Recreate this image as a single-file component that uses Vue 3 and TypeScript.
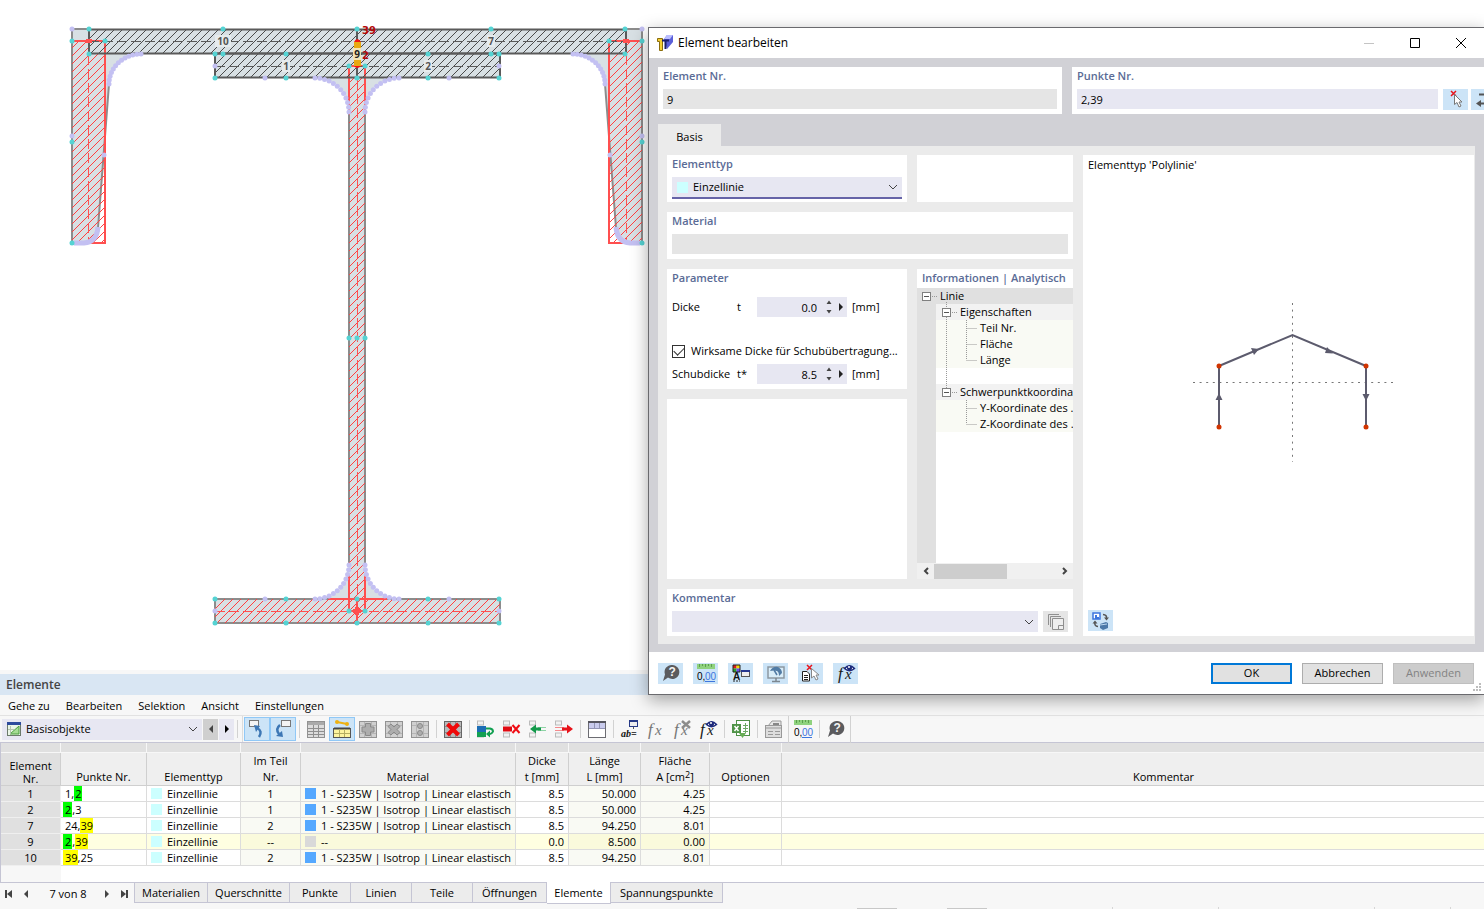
<script setup lang="ts">
import { ref } from 'vue'

interface Pt { x: number; y: number }

/* ---------- section drawing ---------- */
const axis = 357

const mirror = (pts: Pt[]): Pt[] => [...pts, ...pts.map(p => ({ x: 2 * axis - p.x, y: p.y }))]

function quarter(cx: number, cy: number, rx: number, ry: number, from: number, to: number, steps: number): Pt[] {
  return Array.from({ length: steps + 1 }, (_, i) => {
    const a = ((from + ((to - from) * i) / steps) * Math.PI) / 180
    return { x: cx + rx * Math.cos(a), y: cy + ry * Math.sin(a) }
  })
}

const softNodes: Pt[] = mirror([
  { x: 72, y: 29 }, { x: 72, y: 136 }, { x: 104, y: 155 },
  { x: 215, y: 66 }, { x: 265, y: 78 }, { x: 265, y: 599 }, { x: 215, y: 611 },
  ...quarter(141, 84, 32, 30, 180, 270, 12),
  ...quarter(315, 112, 34, 34, 0, -90, 11),
  ...quarter(315, 565, 34, 34, 0, 90, 11),
])

const hardNodes: Pt[] = [
  ...mirror([
    { x: 72, y: 41 }, { x: 105, y: 41 }, { x: 72, y: 142 }, { x: 72, y: 243 },
    { x: 89, y: 29 }, { x: 223, y: 29 }, { x: 89, y: 54 }, { x: 223, y: 54 },
    { x: 215, y: 54 }, { x: 286, y: 54 }, { x: 286, y: 78 }, { x: 215, y: 78 },
    { x: 349, y: 66 }, { x: 349, y: 338 }, { x: 349, y: 611 },
    { x: 215, y: 599 }, { x: 286, y: 599 }, { x: 215, y: 623 }, { x: 286, y: 623 },
  ]),
  { x: 357, y: 29 }, { x: 357, y: 78 }, { x: 357, y: 338 }, { x: 357, y: 599 }, { x: 357, y: 623 },
]

const elementLabels = [
  { x: 223, y: 41, t: '10' }, { x: 491, y: 41, t: '7' },
  { x: 286, y: 66, t: '1' }, { x: 428, y: 66, t: '2' },
]

/* ---------- icons ---------- */
const fxText = (c: string) =>
  `<text x="1" y="15" font-family="Liberation Serif, serif" font-style="italic" font-size="17" fill="${c}">f</text><text x="8" y="15" font-family="Liberation Serif, serif" font-style="italic" font-size="15" fill="${c}">x</text>`

const eye =
  '<path d="M7.500 4.500Q12.500-1 17.500 4.500Q12.500 9 7.500 4.500Z" fill="#fff" stroke="#1d2a7c" stroke-width="1.500"/><circle cx="12.500" cy="4" r="2.500" fill="#1d2a7c"/><circle cx="12" cy="3" r="1" fill="#fff"/>'

const cells =
  '<rect x="0.500" y="1" width="6" height="4" fill="#f2f2f2" stroke="#bbb"/><rect x="0.500" y="13" width="6" height="4" fill="#f2f2f2" stroke="#bbb"/>'

const greyTile = '<rect x="0.500" y="1.500" width="17" height="16" fill="#d0d0d0" stroke="#929292"/><path d="M1 5.500H17M1 13.500H17M5.500 2V17M12.500 2V17" stroke="#b5b5b5"/>'

const icons: Record<string, string> = {
  jumpUp: '<rect x="1.500" y="0.500" width="9" height="6" fill="#f4f4f4" stroke="#777"/><path d="M11 17Q15 11 9 8" fill="none" stroke="#3d77b5" stroke-width="2.500"/><path d="M6 5L12 6L8 12Z" fill="#3d77b5"/>',
  jumpDown: '<rect x="7.500" y="0.500" width="9" height="6" fill="#f4f4f4" stroke="#777"/><path d="M6 5Q1 9 5 14" fill="none" stroke="#3d77b5" stroke-width="2.500"/><path d="M9 17L2 16L8 11Z" fill="#3d77b5"/>',
  grid: '<rect x="0.500" y="1.500" width="17" height="16" fill="#dcdcdc" stroke="#929292"/><path d="M1 2H17V5H1Z" fill="#aaa"/><path d="M1 8.500H17M1 11.500H17M1 14.500H17M6.500 5V17M11.500 5V17" stroke="#8f8f8f"/>',
  gridPick: '<path d="M4 2L14 4" stroke="#eeb111" stroke-width="2"/><circle cx="4" cy="2" r="2" fill="#eeb111"/><circle cx="14" cy="4" r="2" fill="#eeb111"/><rect x="0.500" y="8.500" width="17" height="9" fill="#fdf4a0" stroke="#555"/><path d="M1 8.500H17" stroke="#444" stroke-width="2"/><path d="M1 13.500H17M6.500 9V17M11.500 9V17" stroke="#b5ae62"/>',
  plus: greyTile + '<path d="M6.500 3.500H11.500V7H15V12H11.500V15.500H6.500V12H3V7H6.500Z" fill="#adadad" stroke="#8a8a8a"/>',
  cross: greyTile + '<path d="M6 4L9 7L12 4L15 6.500L12 9.500L15 12.500L12 15L9 12L6 15L3 12.500L6 9.500L3 6.500Z" fill="#adadad" stroke="#8a8a8a"/>',
  dots: greyTile + '<circle cx="9" cy="6" r="2.500" fill="#adadad" stroke="#8a8a8a"/><circle cx="9" cy="13" r="2.500" fill="#adadad" stroke="#8a8a8a"/>',
  deleteAll: '<rect x="0.500" y="1.500" width="17" height="16" fill="#b9b9b9" stroke="#666"/><path d="M1 6.500H17M1 12.500H17M6.500 2V17M11.500 2V17" stroke="#8b8b8b"/><path d="M3.500 4L14.500 15M14.500 4L3.500 15" stroke="#f00808" stroke-width="4"/>',
  rowInsert: cells + '<path d="M0 6H9V12H0Z" fill="#1c6db5"/><path d="M0 12H9V17H0Z" fill="#12a052"/><path d="M9 8.500H13Q16 9 16 11.500Q15 14 12 14" fill="none" stroke="#12a052" stroke-width="2"/><path d="M13 10.500V17.500L9 14Z" fill="#12a052"/>',
  rowDelete: cells + '<path d="M0 6.500H9V11.500H0Z" fill="#e00a12"/><path d="M9.500 5L16.500 13M16.500 5L9.500 13" stroke="#f00c14" stroke-width="2"/>',
  rowLeft: cells + '<path d="M9 7.500H17M9 10.500H17" stroke="#8ed3a5"/><path d="M6 9H12" stroke="#12994a" stroke-width="3"/><path d="M1 9L7 4.500V13.500Z" fill="#12994a"/>',
  rowRight: cells + '<path d="M0 7.500H9M0 10.500H9" stroke="#f5898c"/><path d="M7 9H13" stroke="#e7131a" stroke-width="3"/><path d="M18 9L12 4.500V13.500Z" fill="#e7131a"/>',
  layout: '<rect x="0.500" y="1.500" width="17" height="16" fill="#fff" stroke="#6c6c72"/><path d="M1 3H17V9H1Z" fill="#c9cbed"/><path d="M1 8.500H17M6.500 3V8M11.500 3V8" stroke="#9295b5"/><path d="M0 2H18" stroke="#55555e" stroke-width="2"/>',
  rename: '<rect x="8.500" y="0.500" width="8" height="6" fill="#eee" stroke="#273a87"/><path d="M8 1H17" stroke="#273a87" stroke-width="2"/><path d="M12.500 7V9" stroke="#555"/><text x="0" y="17" font-family="Liberation Serif, serif" font-style="italic" font-weight="700" font-size="10" fill="#111">ab=</text>',
  fx: fxText('#767676'),
  fxDelete: fxText('#767676') + '<path d="M9 1L17 8M17 1L9 8" stroke="#8c8c8c" stroke-width="2.500"/>',
  fxView: fxText('#1a1a1a') + eye,
  excel: '<rect x="4.500" y="0.500" width="13" height="15" fill="#fff" stroke="#4f8f48"/><path d="M11 5.500H16M11 8.500H16M11 11.500H16M13.500 3V13" stroke="#6da965"/><path d="M0 4H9V13H0Z" fill="#4f9347"/><path d="M2.500 6L6.500 11M6.500 6L2.500 11" stroke="#fff" stroke-width="1.500"/><path d="M7 13H14L10.500 18Z" fill="#67ad55"/>',
  printer: '<path d="M3 6L7 1H16V7" fill="#e8e8e8" stroke="#999"/><rect x="0.500" y="5.500" width="16" height="12" fill="#ddd" stroke="#999"/><path d="M1 8H16M3 11.500H8M10 11.500H15M3 14.500H8M10 14.500H15" stroke="#999"/><path d="M8 4H14" stroke="#888" stroke-width="2"/>',
  units: '<rect x="0" y="0" width="18" height="5" fill="#8fd27e"/><path d="M2.500 0V3M5.500 0V2M8.500 0V3M11.500 0V2M14.500 0V3" stroke="#5d9f4e"/><text x="0" y="16" font-family="Liberation Sans, sans-serif" font-size="10" fill="#000">0,</text><text x="8" y="16" font-family="Liberation Sans, sans-serif" font-size="10" fill="#3d76de">00</text><path d="M8 17.500H18" stroke="#3d76de"/>',
  help: '<path d="M10 1A7 7 0 1 1 6 13.500L1 17L3 10.500A7 7 0 0 1 10 1Z" fill="#5b5b5e"/><text x="6.500" y="12" font-family="Liberation Sans, sans-serif" font-weight="700" font-size="12" fill="#f4f4f4">?</text>',
  pick: '<path d="M4 0L9 5M9 0L4 5" stroke="#e8141c" stroke-width="1.500"/><path d="M7.500 3.500V13.500L10 11.500L12 16L14 15L12 11H15Z" fill="#fff" stroke="#777"/>',
  swap: '<path d="M4 3.500H16" stroke="#555" stroke-width="2"/><path d="M4 12.500H16" stroke="#555" stroke-width="2"/><path d="M1 12.500L6 9V16Z" fill="#555"/>',
  colours: '<path d="M1 1H4.500V4.500H1Z" fill="#e01b1b"/><path d="M4.500 1H8V4.500H4.500Z" fill="#f4d800"/><path d="M1 4.500H4.500V8H1Z" fill="#28a428"/><path d="M4.500 4.500H8V8H4.500Z" fill="#6f4cf0"/><path d="M1 1H8V8H1Z" fill="none" stroke="#222"/><text x="1" y="16" font-family="Liberation Sans, sans-serif" font-weight="700" font-size="10" fill="#111">A</text><path d="M1 17H8" stroke="#222" stroke-dasharray="2 1"/><rect x="9.500" y="6.500" width="8" height="6" fill="#eee" stroke="#555"/><path d="M9 7H18" stroke="#25378f" stroke-width="2"/>',
  screen: '<rect x="1" y="3" width="16" height="11" fill="#d9edf9" stroke="#8c98a2" stroke-width="1.500"/><path d="M3 7Q6 2 11 3Q15 5 15 9L12 12Q12 8 10 7Q7 6 3 7Z" fill="#527ca5"/><path d="M7 6L10 11" stroke="#527ca5" stroke-width="1.500"/><path d="M9 14V17M5 17.500H13" stroke="#7c8790" stroke-width="1.500"/>',
  pickList: '<path d="M5 1L10 6M10 1L5 6" stroke="#e8141c" stroke-width="1.500"/><path d="M0.500 7.500H5L7.500 10V17H0.500Z" fill="#fff" stroke="#222"/><path d="M2 11.500H6M2 13.500H6M2 15.500H6" stroke="#222"/><path d="M9.500 4.500V14L12 12L14 16L16 15L14 11H17Z" fill="#fff" stroke="#888"/>',
  copies: '<path d="M1.500 1.500H12M1.500 1.500V12M3.500 3.500H14M3.500 3.500V14" fill="none" stroke="#8f8f8f"/><path d="M5.500 5.500H16.500V16.500H5.500Z" fill="#eee" stroke="#8f8f8f"/><path d="M11.500 16V12.500H16" fill="none" stroke="#8f8f8f"/>',
  switchView: '<rect x="1" y="1" width="7" height="6" fill="#fff" stroke="#3d76de" stroke-width="1.500"/><path d="M3 3H5V5H7V7H3Z" fill="#3d76de"/><path d="M11 2.500Q15 3 14.500 6M3 10Q2 14 6 14.500" fill="none" stroke="#555" stroke-width="1.500"/><path d="M12 5.500H17L14.500 8.500ZM0.500 11.500H5.500L3 8.500Z" fill="#555"/><path d="M8 12L14 10L16 11V16L11 18L8 16Z" fill="#4d79a8"/><path d="M8 13L15 12" stroke="#bcd7ee"/>',
}

interface Tool { icon?: string; label?: string; on?: boolean; tight?: boolean }
const tools: Tool[] = [
  { icon: 'jumpUp', label: 'Zur Grafik springen', on: true },
  { icon: 'jumpDown', label: 'Zur Tabelle springen', on: true },
  {},
  { icon: 'grid', label: 'Tabelle' },
  { icon: 'gridPick', label: 'Selektierte anzeigen', on: true },
  { icon: 'plus', label: 'Hinzufügen' },
  { icon: 'cross', label: 'Entfernen' },
  { icon: 'dots', label: 'Filter' },
  {},
  { icon: 'deleteAll', label: 'Alles löschen' },
  {},
  { icon: 'rowInsert', label: 'Zeile einfügen' },
  { icon: 'rowDelete', label: 'Zeile löschen' },
  { icon: 'rowLeft', label: 'Zeile links' },
  { icon: 'rowRight', label: 'Zeile rechts' },
  {},
  { icon: 'layout', label: 'Anordnung' },
  {},
  { icon: 'rename', label: 'Umbenennen' },
  { icon: 'fx', label: 'Formel' },
  { icon: 'fxDelete', label: 'Formel löschen' },
  { icon: 'fxView', label: 'Formel anzeigen' },
  {},
  { icon: 'excel', label: 'Excel-Export' },
  {},
  { icon: 'printer', label: 'Drucken' },
  { tight: true },
  { icon: 'units', label: 'Einheiten' },
  {},
  { icon: 'help', label: 'Hilfe' },
  { tight: true },
]

const footTools = [
  { icon: 'help', label: 'Hilfe' },
  { icon: 'units', label: 'Einheiten' },
  { icon: 'colours', label: 'Darstellung' },
  { icon: 'screen', label: 'Ansicht' },
  { icon: 'pickList', label: 'Auswahl' },
  { icon: 'fxView', label: 'Formeln' },
]

/* ---------- table ---------- */
const menus = ['Gehe zu', 'Bearbeiten', 'Selektion', 'Ansicht', 'Einstellungen']

interface Part { t: string; c?: 'g' | 'y' }
interface Row { nr: number; pts: Part[]; teil: string; mat: string; d: string; l: string; a: string }
const steel = '1 - S235W | Isotrop | Linear elastisch'
const rows: Row[] = [
  { nr: 1, pts: [{ t: '1,' }, { t: '2', c: 'g' }], teil: '1', mat: steel, d: '8.5', l: '50.000', a: '4.25' },
  { nr: 2, pts: [{ t: '2', c: 'g' }, { t: ',3' }], teil: '1', mat: steel, d: '8.5', l: '50.000', a: '4.25' },
  { nr: 7, pts: [{ t: '24,' }, { t: '39', c: 'y' }], teil: '2', mat: steel, d: '8.5', l: '94.250', a: '8.01' },
  { nr: 9, pts: [{ t: '2', c: 'g' }, { t: ',' }, { t: '39', c: 'y' }], teil: '--', mat: '--', d: '0.0', l: '8.500', a: '0.00' },
  { nr: 10, pts: [{ t: '39', c: 'y' }, { t: ',25' }], teil: '2', mat: steel, d: '8.5', l: '94.250', a: '8.01' },
]

const sheets = ['Materialien', 'Querschnitte', 'Punkte', 'Linien', 'Teile', 'Öffnungen', 'Elemente', 'Spannungspunkte']
const activeSheet = ref('Elemente')

/* ---------- dialog ---------- */
const elementNr = ref('9')
const pointNrs = ref('2,39')
const thickness = ref('0.0')
const shearThickness = ref('8.5')
const shearOn = ref(true)

const tree = [
  { t: 'Linie', level: 0 },
  { t: 'Eigenschaften', level: 1 },
  { t: 'Teil Nr.', level: 2 },
  { t: 'Fläche', level: 2 },
  { t: 'Länge', level: 2 },
  { t: '', level: 3 },
  { t: 'Schwerpunktkoordina', level: 1 },
  { t: 'Y-Koordinate des .', level: 2 },
  { t: 'Z-Koordinate des .', level: 2 },
]
</script>

<template>
  <div class="app">
    <main class="canvas">
      <svg class="section" width="648" height="670" viewBox="0 0 648 670" role="img" aria-label="Querschnitt">
        <defs>
          <pattern id="hatchRed" width="8" height="8" patternUnits="userSpaceOnUse">
            <path d="M-1 9L9 -1M-1 1L1 -1M7 9L9 7" stroke="#ff4040" shape-rendering="crispEdges" />
          </pattern>
          <pattern id="hatchDark" width="8" height="8" patternUnits="userSpaceOnUse">
            <path d="M-1 9L9 -1M-1 1L1 -1M7 9L9 7" stroke="#4b4b4b" shape-rendering="crispEdges" />
          </pattern>
        </defs>

        <g fill="#d8e0e4">
          <path d="M72 29H642V243H630Q618 242 616 228L605 84Q601 56 573 54H500V78H399Q366 80 365 112V565Q367 598 399 599H500V623H215V599H315Q347 598 349 565V112Q348 80 315 78H215V54H141Q112 56 109 84L98 228Q96 242 84 243H72Z" />
        </g>
        <g fill="none" stroke="#8c8c8c" stroke-width="2">
          <path d="M89 29H72V243M109 84L98 228M626 29H642V243M605 84L616 228" />
          <path d="M349 112V565M365 112V565" />
          <path d="M215 599H500V623H215Z" />
        </g>

        <g fill="url(#hatchRed)">
          <path d="M72 41H105V243H72ZM609 41H642V243H609ZM349 66H365V611H349ZM215 599H500V623H215Z" />
        </g>
        <g fill="none" stroke="#ff4f4f">
          <path d="M72 41H105V243H86M642 41H609V243H628" stroke-width="2" />
          <path d="M349 66H365M349 66V112M365 66V112M349 575V611M365 575V611M329 599H387M349 611H365M357 599V623" stroke-width="2" />
          <path d="M88.500 41V243M626.500 41V243M357.500 66V599M215 611.500H500" stroke-dasharray="10 4" />
        </g>

        <g stroke="#5a5a5a" stroke-width="2">
          <path d="M89 29.500H626V53.500H89Z" fill="url(#hatchDark)" />
          <path d="M215 53.500H500V77.500H215Z" fill="url(#hatchDark)" />
          <path d="M357 29V78" />
          <path d="M89 41.500H626M215 66.500H500" fill="none" stroke-width="1" stroke-dasharray="10 4" />
        </g>

        <g fill="none" stroke="#c3c0f2" stroke-width="5">
          <path d="M98 227Q97 242 84 243H74M616 227Q617 242 630 243H640" />
        </g>
        <g fill="#c3c0f2">
          <circle v-for="(p, i) in softNodes" :key="i" :cx="p.x" :cy="p.y" r="2.500" />
        </g>
        <g fill="#55d3d3">
          <circle v-for="(p, i) in hardNodes" :key="i" :cx="p.x" :cy="p.y" r="2.500" />
        </g>
        <path d="M86 41H92M623 41H629M353 611H361M357 607V615" stroke="#ff4f4f" stroke-width="4" />

        <g class="tag">
          <g v-for="l in elementLabels" :key="l.t">
            <rect :x="l.x - l.t.length * 4" :y="l.y - 6" :width="l.t.length * 8" height="12" fill="#e6ebed" />
            <text :x="l.x" :y="l.y + 4" text-anchor="middle" fill="#555">{{ l.t }}</text>
          </g>
        </g>
        <rect x="354" y="42" width="7" height="24" fill="#e8a912" />
        <path d="M354 42Q357 36 361 42ZM354 66Q357 70 361 66Z" fill="#f21212" />
        <rect x="353" y="48" width="8" height="12" fill="#f3e3b4" />
        <g class="tag">
          <text x="357" y="58" text-anchor="middle" fill="#222">9</text>
          <text x="362" y="34" fill="#b30808" class="point">39</text>
          <text x="362" y="59" fill="#b30808" class="point">2</text>
        </g>
      </svg>
    </main>

    <section class="panel">
      <h2 class="panel-title">Elemente</h2>
      <nav class="menu">
        <button v-for="m in menus" :key="m" type="button">{{ m }}</button>
      </nav>

      <div class="toolbar">
        <div class="combo objects">
          <svg class="lead" width="14" height="14" viewBox="0 0 14 14" aria-hidden="true">
            <rect x="0.500" y="0.500" width="13" height="13" fill="#e9f5e6" stroke="#6b7a6b" />
            <path d="M0 0H14V3H0Z" fill="#2c4a9c" /><path d="M3 12L12 4V12Z" fill="#a5dc94" stroke="#4a9c3c" />
            <path d="M3.500 4V12M1 7.500H7" stroke="#b4c4b0" />
          </svg>
          <select aria-label="Objektgruppe"><option>Basisobjekte</option></select>
          <svg class="chev" width="10" height="6" viewBox="0 0 10 6" aria-hidden="true"><path d="M1 1L5 5L9 1" /></svg>
        </div>
        <button type="button" class="step off" aria-label="Zurück"><svg width="4" height="8"><path d="M4 0V8L0 4Z" fill="#444" /></svg></button>
        <button type="button" class="step" aria-label="Weiter"><svg width="4" height="8"><path d="M0 0V8L4 4Z" fill="#000" /></svg></button>
        <i class="sep" />
        <div class="tools">
          <template v-for="(t, i) in tools" :key="i">
            <button v-if="t.icon" type="button" class="tool" :class="{ on: t.on }" :aria-label="t.label">
              <svg width="18" height="18" viewBox="0 0 18 18" v-html="icons[t.icon]" />
            </button>
            <i v-else class="sep" :class="{ tight: t.tight }" />
          </template>
        </div>
      </div>

      <div class="sheet">
        <table>
          <colgroup>
            <col class="c1"><col class="c2"><col class="c3"><col class="c4"><col class="c5">
            <col class="c6"><col class="c7"><col class="c8"><col class="c9"><col>
          </colgroup>
          <thead>
            <tr class="strip"><td v-for="n in 10" :key="n" /></tr>
            <tr class="heads">
              <th class="mid">Element<br>Nr.</th>
              <th>Punkte Nr.</th>
              <th>Elementtyp</th>
              <th>Im Teil<br>Nr.</th>
              <th>Material</th>
              <th>Dicke<br>t [mm]</th>
              <th>Länge<br>L [mm]</th>
              <th>Fläche<br>A [cm<sup>2</sup>]</th>
              <th>Optionen</th>
              <th class="last">Kommentar</th>
            </tr>
          </thead>
          <tbody>
            <tr v-for="r in rows" :key="r.nr" :class="{ current: r.nr === 9 }">
              <th scope="row">{{ r.nr }}</th>
              <td class="pts"><span v-for="(p, i) in r.pts" :key="i" :class="p.c">{{ p.t }}</span></td>
              <td class="typ"><i class="sw cyan" />Einzellinie</td>
              <td class="ro c">{{ r.teil }}</td>
              <td class="ro mat"><i class="sw" :class="r.mat === '--' ? 'none' : 'blue'" />{{ r.mat }}</td>
              <td class="num">{{ r.d }}</td>
              <td class="num ro">{{ r.l }}</td>
              <td class="num ro">{{ r.a }}</td>
              <td />
              <td />
            </tr>
          </tbody>
        </table>
        <div class="rest" />
      </div>

      <footer class="sheets">
        <div class="pager">
          <button type="button" aria-label="Erste"><svg width="8" height="8"><path d="M1 0V8" stroke="#444" stroke-width="2" /><path d="M7 0V8L2 4Z" fill="#444" /></svg></button>
          <button type="button" aria-label="Vorherige"><svg width="8" height="8"><path d="M6 0V8L2 4Z" fill="#444" /></svg></button>
          <span>7 von 8</span>
          <button type="button" aria-label="Nächste"><svg width="8" height="8"><path d="M2 0V8L6 4Z" fill="#444" /></svg></button>
          <button type="button" aria-label="Letzte"><svg width="8" height="8"><path d="M7 0V8" stroke="#444" stroke-width="2" /><path d="M1 0V8L6 4Z" fill="#444" /></svg></button>
        </div>
        <button
          v-for="s in sheets" :key="s" type="button" class="sheet-tab"
          :class="{ active: s === activeSheet }" @click="activeSheet = s"
        >{{ s }}</button>
      </footer>
      <div class="status"><i class="bar" /><i class="bar" /><i class="tick" /><i class="tick" /><i class="tick wide-tick" /><i class="tick" /></div>
    </section>

    <div class="dialog" role="dialog" aria-labelledby="dlg-title">
      <header class="titlebar">
        <svg width="16" height="16" viewBox="0 0 16 16" aria-hidden="true">
          <path d="M7 4L10 0H16V7L10 14Z" fill="#5a5fd8" /><path d="M7 4L10 0H16L13 4Z" fill="#b9bdff" />
          <path d="M0.500 3.500H5.500V15.500H2.500V6.500H0.500Z" fill="#f5cf33" stroke="#8a6d0c" />
          <path d="M5 5.500H12M8.500 5V14" stroke="#1b1f6b" stroke-width="2" />
        </svg>
        <h1 id="dlg-title">Element bearbeiten</h1>
        <button type="button" aria-label="Minimieren"><svg width="10" height="10"><path d="M0 5.500H10" stroke="#c4c4c4" /></svg></button>
        <button type="button" aria-label="Maximieren"><svg width="10" height="10"><path d="M0.500 0.500H9.500V9.500H0.500Z" fill="none" stroke="#000" /></svg></button>
        <button type="button" aria-label="Schließen"><svg width="10" height="10"><path d="M0 0L10 10M10 0L0 10" stroke="#000" /></svg></button>
      </header>

      <div class="body">
        <div class="ids">
          <div class="box">
            <label class="cap" for="f-nr">Element Nr.</label>
            <input id="f-nr" v-model="elementNr" class="field dim" readonly>
          </div>
          <div class="box points">
            <label class="cap" for="f-pts">Punkte Nr.</label>
            <div class="line">
              <input id="f-pts" v-model="pointNrs" class="field">
              <button type="button" class="sq" aria-label="Punkte wählen"><svg width="18" height="18" viewBox="0 0 18 18" v-html="icons.pick" /></button>
              <button type="button" class="sq" aria-label="Tauschen"><svg width="18" height="18" viewBox="0 0 18 18" v-html="icons.swap" /></button>
            </div>
          </div>
        </div>

        <div class="tabs"><button type="button">Basis</button></div>

        <div class="page">
          <div class="left">
            <div class="box">
              <label class="cap" for="f-typ">Elementtyp</label>
              <div class="combo active">
                <i class="sw cyan lead" />
                <select id="f-typ"><option>Einzellinie</option></select>
                <svg class="chev" width="10" height="6" viewBox="0 0 10 6" aria-hidden="true"><path d="M1 1L5 5L9 1" /></svg>
              </div>
            </div>
            <div class="box" />
            <div class="box wide">
              <label class="cap" for="f-mat">Material</label>
              <input id="f-mat" class="field dim" readonly>
            </div>
            <div class="box params">
              <h3 class="cap">Parameter</h3>
              <div class="param first">
                <label for="f-t">Dicke</label><span class="sym">t</span>
                <div class="spin">
                  <input id="f-t" v-model="thickness">
                  <svg width="6" height="14"><path d="M0.500 4L3 0.500L5.500 4ZM0.500 10L3 13.500L5.500 10Z" fill="#444" /></svg>
                  <svg width="4" height="8"><path d="M0 0V8L4 4Z" fill="#222" /></svg>
                </div>
                <span>[mm]</span>
              </div>
              <label class="check"><input v-model="shearOn" type="checkbox"><span>Wirksame Dicke für Schubübertragung...</span></label>
              <div class="param">
                <label for="f-ts">Schubdicke</label><span class="sym">t*</span>
                <div class="spin">
                  <input id="f-ts" v-model="shearThickness">
                  <svg width="6" height="14"><path d="M0.500 4L3 0.500L5.500 4ZM0.500 10L3 13.500L5.500 10Z" fill="#444" /></svg>
                  <svg width="4" height="8"><path d="M0 0V8L4 4Z" fill="#222" /></svg>
                </div>
                <span>[mm]</span>
              </div>
            </div>
            <div class="box info">
              <h3 class="cap">Informationen | Analytisch</h3>
              <div class="tree">
                <ul>
                  <li v-for="(n, i) in tree" :key="i" :class="'lv' + n.level">
                    <button v-if="n.level < 2" type="button" class="exp" :aria-label="n.t + ' zuklappen'" />
                    <span>{{ n.t }}</span>
                  </li>
                </ul>
                <svg class="links" width="62" height="144" aria-hidden="true">
                  <path d="M15 8.500H20M29.500 14V20M29.500 29V100M35 24.500H40M35 104.500H40M49.500 32V72M49.500 40.500H60M49.500 56.500H60M49.500 72.500H60M49.500 112V136M49.500 120.500H60M49.500 136.500H60" />
                </svg>
              </div>
              <div class="hscroll">
                <button type="button" aria-label="Nach links"><svg width="6" height="8"><path d="M5 1L2 4L5 7" /></svg></button>
                <div class="thumb" />
                <button type="button" aria-label="Nach rechts"><svg width="6" height="8"><path d="M1 1L4 4L1 7" /></svg></button>
              </div>
            </div>
            <div class="box blank" />
            <div class="box wide">
              <label class="cap" for="f-com">Kommentar</label>
              <div class="line">
                <div class="combo grow">
                  <select id="f-com"><option /></select>
                  <svg class="chev" width="10" height="6" viewBox="0 0 10 6" aria-hidden="true"><path d="M1 1L5 5L9 1" /></svg>
                </div>
                <button type="button" class="sq grey" aria-label="Kommentare"><svg width="18" height="18" viewBox="0 0 18 18" v-html="icons.copies" /></button>
              </div>
            </div>
          </div>

          <div class="preview">
            <p>Elementtyp 'Polylinie'</p>
            <svg width="200" height="160" viewBox="0 0 200 160" role="img" aria-label="Polylinie">
              <path d="M0 80.500H200M99.500 1V160" stroke="#777" stroke-dasharray="2 4.600" />
              <path d="M26 125V64L99.500 33L173 64V125" fill="none" stroke="#5c5b6d" stroke-width="2" />
              <path d="M22.500 98L26 91L29.500 98ZM169.500 92L173 99L176.500 92ZM58 46L66 47L61 53ZM134 45L132 51L140 51.500Z" fill="#5c5b6d" />
              <g fill="#d13400"><circle cx="26" cy="64" r="2.500" /><circle cx="26" cy="125" r="2.500" /><circle cx="173" cy="64" r="2.500" /><circle cx="173" cy="125" r="2.500" /></g>
            </svg>
            <button type="button" class="sq" aria-label="Ansicht wechseln"><svg width="18" height="18" viewBox="0 0 18 18" v-html="icons.switchView" /></button>
          </div>
        </div>
      </div>

      <footer class="foot">
        <button v-for="f in footTools" :key="f.icon" type="button" class="sq" :aria-label="f.label">
          <svg width="18" height="18" viewBox="0 0 18 18" v-html="icons[f.icon]" />
        </button>
        <span class="grow" />
        <button type="button" class="btn ok">OK</button>
        <button type="button" class="btn">Abbrechen</button>
        <button type="button" class="btn" disabled>Anwenden</button>
        <svg class="grip" width="8" height="8" aria-hidden="true"><path d="M6 0H8V2H6ZM3 3H5V5H3ZM6 3H8V5H6ZM0 6H2V8H0ZM3 6H5V8H3ZM6 6H8V8H6Z" fill="#bdbdbd" /></svg>
      </footer>
    </div>
  </div>
</template>

<style>
body { margin: 0; background: #f7f7f7; }
</style>

<style scoped>
* { box-sizing: border-box; }
.app {
  position: relative;
  display: flex;
  flex-direction: column;
  min-height: 100vh;
  overflow: hidden;
  background: #f7f7f7;
  color: #000;
  font: 11px/16px "Open Sans", "Noto Sans", sans-serif;
}
button, input, select { font: inherit; color: inherit; border: 0; padding: 0; margin: 0; background: none; border-radius: 0; }
input, select { min-width: 0; }
h1, h2, h3, p, ul { margin: 0; padding: 0; font-size: inherit; }
svg { display: block; flex: none; overflow: visible; }

.canvas { flex: 1; background: #fff; margin-bottom: 4px; overflow: hidden; }
.tag { font: 700 10px "Open Sans", sans-serif; }
.tag .point { font-family: "DejaVu Sans", sans-serif; }

/* table panel */
.panel-title { height: 21px; padding-left: 6px; background: #d9e6f3; font: 600 12px/21px "Open Sans", "Noto Sans", sans-serif; color: #444; }
.menu { display: flex; gap: 16px; height: 21px; padding: 1px 0 0 8px; border-bottom: 1px solid #e2e2e2; }
.toolbar { display: flex; align-items: center; height: 27px; padding-left: 2px; border-bottom: 1px solid #c5c5d4; }
.tools { display: flex; align-items: center; height: 100%; margin-left: 4px; padding-left: 1px; border-left: 1px solid #dcdcdc; }
.tool { display: grid; place-items: center; width: 26px; height: 24px; border: 1px solid transparent; }
.tool.on { background: #cce4f7; border-color: #90c8f6; }
.sep { flex: none; width: 1px; height: 18px; margin: 0 3px; background: #d2d2d2; }
.sep.tight { height: 27px; margin: 0 1px; }
.toolbar > .sep { margin: 0 0 0 3px; }
.combo { position: relative; display: flex; align-items: center; height: 21px; background: #e7e7f2; }
.combo select { appearance: none; width: 100%; height: 100%; padding-left: 21px; }
.combo .lead { position: absolute; left: 5px; }
.combo .chev { position: absolute; right: 4px; fill: none; stroke: #444; pointer-events: none; }
.combo.active { border-bottom: 2px solid #6664a8; height: 22px; }
.objects { width: 200px; }
.objects select { padding-left: 24px; }
.step { display: grid; place-items: center; width: 15px; height: 21px; margin-left: 1px; background: #e7e7f2; }
.step.off { background: #cfcfcf; }

.sheet { background: #fff; border-left: 1px solid #c5c5d4; }
table { width: 100%; table-layout: fixed; border-collapse: separate; border-spacing: 0; }
.c1 { width: 60px; } .c2 { width: 86px; } .c3 { width: 94px; } .c4 { width: 60px; } .c5 { width: 215px; }
.c6 { width: 53px; } .c7 { width: 72px; } .c8 { width: 69px; } .c9 { width: 72px; }
th { font-weight: 400; }
td, th { padding: 0; white-space: nowrap; overflow: hidden; }
.strip td { height: 10px; background: #e0e0e0; border-right: 1px solid #f7f7f7; border-bottom: 1px solid #f7f7f7; }
.heads th { height: 32px; background: #efefef; vertical-align: bottom; border-right: 1px solid #cfcfcf; border-bottom: 1px solid #cfcfcf; }
.heads th:first-child { background: #e0e0e0; line-height: 13px; vertical-align: bottom; }
.heads .last { padding-left: 61px; }
.strip td:last-child, .heads th:last-child, tbody td:last-child { border-right: 0; }
sup { font-size: 9px; line-height: 0; vertical-align: 3px; }
tbody td, tbody th { height: 16px; line-height: 15px; border-right: 1px solid #dcdcdc; border-bottom: 1px solid #dcdcdc; }
tbody th { background: #e0e0e0; border-color: #efefef; }
.ro { background: #f9faf4; }
.current td { background: #ffffe1; }
.current .ro { background: #fafadc; }
.c { text-align: center; }
.num { text-align: right; padding-right: 4px; }
.pts { padding-left: 2px; }
.pts span { display: inline-block; }
.pts span:first-child { padding-left: 2px; }
.pts .g { background: #0f0; padding: 0 1px; }
.pts .y { background: #ff0; }
.typ { padding-left: 4px; }
.mat { padding-left: 4px; }
.sw { display: inline-block; width: 11px; height: 11px; margin-right: 5px; vertical-align: -1px; }
.cyan { background: #cff; }
.blue { background: #55a8ff; }
.none { background: #d9d9d9; }
.rest { width: 60px; height: 16px; background: #f7f7f7; }

.sheets {
  display: grid;
  grid-template-columns: 134px 74px 82px 61px 61px 61px 74px 64px 112px;
  align-items: start;
  height: 25px;
  border-top: 1px solid #c5c5d4;
}
.pager { display: flex; align-items: center; height: 21px; padding: 0 2px 0 4px; }
.pager button { display: grid; place-items: center; width: 17px; height: 16px; padding-right: 8px; }
.pager span { flex: 1; text-align: center; }
.pager button:nth-last-of-type(-n+2) { padding: 0; }
.sheet-tab { height: 20px; white-space: nowrap; background: #ececec; border: 1px solid #c5c5d4; border-width: 0 1px 1px 0; }
.sheet-tab:nth-of-type(1) { border-left-width: 1px; }
.sheet-tab.active { height: 22px; margin-top: -1px; background: #fff; }
.status { display: flex; align-items: flex-end; justify-content: flex-end; height: 2px; padding-right: 33px; }
.status .bar { width: 40px; height: 1px; margin-right: 50px; background: #c8c8c8; }
.status .tick { width: 1px; height: 2px; margin-left: 75px; background: #d6d6d6; }
.status .tick + .tick { margin-left: 105px; }
.status .tick + .wide-tick { margin-left: 155px; }
.status .wide-tick + .tick { margin-left: 75px; }

/* dialog */
.dialog {
  position: absolute;
  left: 648px;
  right: 0;
  top: 27px;
  background: #fff;
  border: 1px solid #6a6a6e;
  border-right: 0;
  box-shadow: 0 5px 16px rgba(0, 0, 0, 0.35);
}
.titlebar { display: flex; align-items: center; height: 30px; padding-left: 8px; }
.titlebar h1 { flex: 1; margin-left: 5px; font-weight: 400; font-size: 12px; }
.titlebar button { display: grid; place-items: center; width: 46px; height: 30px; }
.body { padding: 9px 9px 8px; background: #d1d1d6; overflow: hidden; }
.box { background: #fff; min-height: 47px; padding: 0 5px 3px; min-width: 0; }
.cap { display: block; height: 18px; margin-bottom: 4px; font-weight: 600; line-height: 18px; color: #5a6b96; white-space: nowrap; }
.field { display: block; width: 100%; height: 20px; padding: 0 4px; background: #e7e7f2; }
.dim { background: #e5e5e5; }
.line { display: flex; gap: 5px; }
.sq { display: grid; place-items: center; flex: none; width: 25px; height: 21px; background: #cce4f7; }
.sq.grey { background: #e5e5e5; }
.ids { display: grid; grid-template-columns: 404px 1fr; gap: 10px; margin-right: -26px; }
.points .line { gap: 3px; }
.points .field { margin-right: 2px; }
.tabs { margin-top: 10px; display: flex; }
.tabs button { width: 63px; height: 22px; padding-top: 3px; background: #ebebeb; }
.page { display: grid; grid-template-columns: 406px 1fr; gap: 10px; padding: 9px 1px 8px 9px; background: #ebebeb; }
.left { display: grid; grid-template-columns: 240px 156px; grid-template-rows: auto auto auto 180px auto; gap: 10px; }
.wide { grid-column: 1 / 3; }
.params { height: 120px; }
.box.info { grid-row: 3 / 5; grid-column: 2; padding: 0; display: flex; flex-direction: column; }
.info .cap { padding-left: 5px; margin: 0 0 1px; }
.blank { grid-column: 1; }
.param { display: flex; align-items: center; height: 20px; }
.param.first { margin: 6px 0 24px; }
.param label { width: 65px; }
.param .sym { width: 20px; }
.spin { display: flex; align-items: center; width: 90px; height: 20px; margin-right: 5px; padding-right: 4px; gap: 7px; background: #e7e7f2; }
.spin input { flex: 1; width: 60px; height: 20px; text-align: right; padding-right: 2px; }
.check { display: flex; align-items: center; gap: 6px; height: 20px; margin-bottom: 3px; }
.check input { appearance: none; width: 13px; height: 13px; border: 1px solid #333; background: #fff; display: grid; place-items: center; flex: none; }
.check input:checked::after { content: ""; width: 9px; height: 5px; border: solid #333; border-width: 0 0 1px 1px; transform: rotate(-45deg); margin-top: -3px; }
.check span { white-space: nowrap; }
.params .cap { margin-bottom: 10px; }
.params .first { margin-top: 0; }
.tree { position: relative; flex: 1; overflow: hidden; background: linear-gradient(to right, #e0e0e0 19px, #fff 19px); }
.tree ul { list-style: none; }
.tree li { display: flex; align-items: center; height: 16px; white-space: nowrap; margin-left: 19px; }
.tree .lv0 { margin-left: 0; padding-left: 5px; background: #e0e0e0; }
.tree .lv1 { padding-left: 6px; background: #f2f2f2; }
.tree .lv2 { padding-left: 44px; background: #f9faf4; }
.exp { flex: none; width: 9px; height: 9px; margin-right: 9px; border: 1px solid #808080; background: linear-gradient(#555, #555) center / 5px 1px no-repeat #fff; }
.links { position: absolute; left: 0; top: 0; fill: none; stroke: #999; stroke-dasharray: 1 1; }
.hscroll { display: flex; align-items: center; height: 16px; background: #f0f0f0; }
.hscroll button { display: grid; place-items: center; width: 17px; height: 16px; fill: none; stroke: #444; stroke-width: 2; }
.hscroll .thumb { width: 73px; height: 15px; background: #cdcdcd; margin-right: auto; }
.grow { flex: 1; }
.preview { display: flex; flex-direction: column; justify-content: space-between; background: #fff; padding: 2px 5px 5px; }
.preview > svg { align-self: center; margin: 0 0 20px 28px; }
.foot { position: relative; display: flex; align-items: center; gap: 10px; height: 42px; padding: 0 10px 0 9px; }
.btn { width: 81px; height: 21px; background: #e1e1e1; border: 1px solid #adadad; }
.btn.ok { border: 2px solid #0078d7; }
.btn:disabled { background: #ccc; border-color: #bfbfbf; color: #838383; }
.grip { position: absolute; right: 3px; bottom: 3px; }
</style>
